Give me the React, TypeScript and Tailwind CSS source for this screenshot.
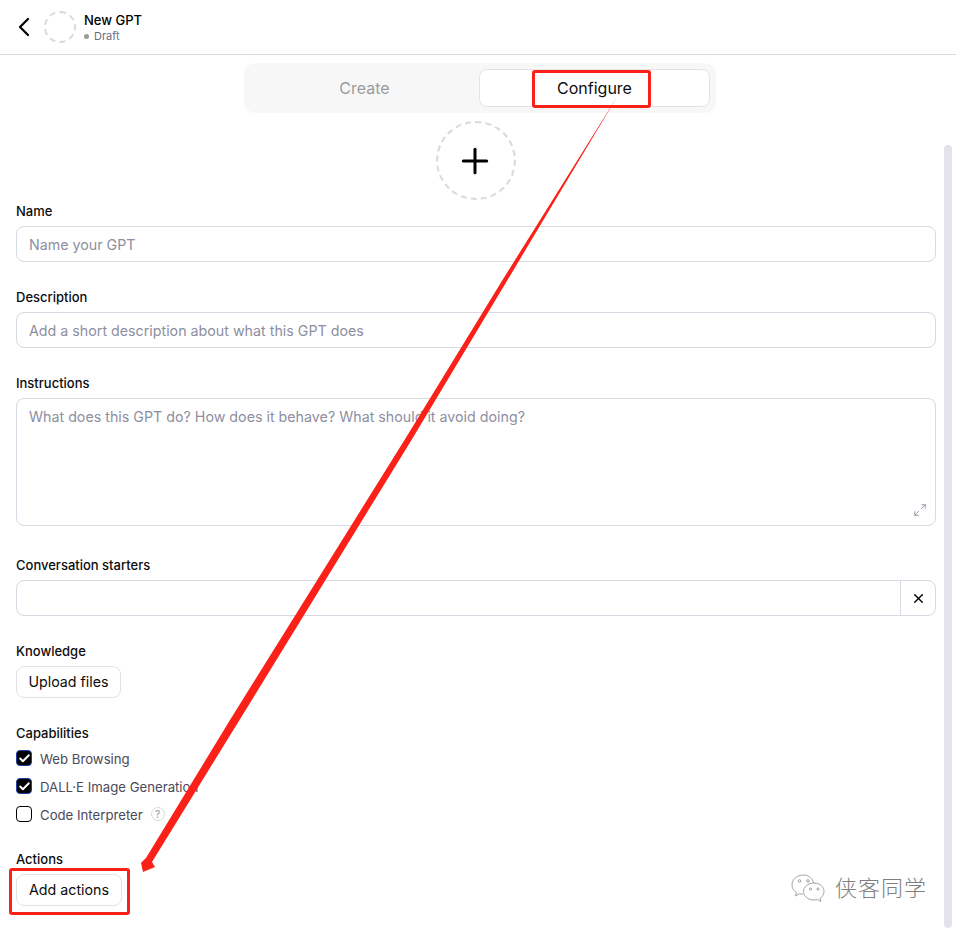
import React from 'react';
import { Check, ChevronLeft, Maximize2, Plus, X } from 'lucide-react';

const font = "font-['Inter','Noto_Sans_CJK_SC',sans-serif]";

const Label = ({ children }: { children: React.ReactNode }) => (
  <div className="h-5 text-[13px] leading-5 font-medium text-[#0d0d0d]">{children}</div>
);

const TextField = ({ placeholder }: { placeholder: string }) => (
  <div className="h-9 rounded-lg border border-[#d9d9e3] px-3 text-[14.25px] leading-9 text-[#8e8ea0]">{placeholder}</div>
);

const OutlineButton = ({ children, width }: { children: string; width: string }) => (
  <div className={`h-8 ${width} rounded-lg border border-[#e3e3e3] text-center text-[14.25px] leading-[30px] text-[#0d0d0d]`}>
    {children}
  </div>
);

const Capability = ({ label, checked }: { label: string; checked?: boolean }) => (
  <div className="flex h-5 items-center gap-2 text-[13.2px] text-[#4a4a5a]">
    {checked ? (
      <span className="flex size-4 items-center justify-center rounded-[4px] border border-[#1d3fa8] bg-black">
        <Check size={13} strokeWidth={3.5} className="text-white" />
      </span>
    ) : (
      <span className="size-4 rounded-[4px] border border-black bg-white" />
    )}
    <span className="mt-1 whitespace-nowrap">{label}</span>
  </div>
);

export default function App() {
  return (
    <div className={`${font} relative h-[930px] w-[956px] overflow-hidden bg-white`}>
      <header className="flex h-[55px] items-center border-b border-[#d9d9d9] pl-2">
        <ChevronLeft size={32} strokeWidth={1.7} className="text-black" />
        <div className="ml-1 size-8 rounded-full border-2 border-dashed border-[#d9d9d9]" />
        <div className="ml-2 pt-px">
          <div className="text-[13px] leading-[18px] font-medium text-black">New GPT</div>
          <div className="flex items-center gap-[5px] text-[11px] leading-[15px] text-[#6e6e80]">
            <span className="size-[5px] rounded-full bg-[#9a9a9a]" />
            Draft
          </div>
        </div>
      </header>

      <div className="ml-[244px] pt-2">
        <div className="flex h-[50px] w-[472px] rounded-xl bg-[#f7f7f7] p-1.5">
          <div className="flex-1 text-center text-base leading-[38px] text-[#9b9b9b]">Create</div>
          <div className="flex-1 rounded-lg border border-[#e3e3e3] bg-white text-center text-base leading-[36px] text-[#0d0d0d]">
            Configure
          </div>
        </div>
      </div>

      <div className="mt-2 flex w-[952px] justify-center">
        <div className="flex h-[79px] w-20 items-center justify-center rounded-full border-2 border-dashed border-[#d9d9d9]">
          <Plus size={40} strokeWidth={1.8} className="-translate-x-px text-black" />
        </div>
      </div>

      <form className="mt-px flex w-[952px] flex-col gap-[25px] px-4">
        <div className="flex flex-col gap-[5px]">
          <Label>Name</Label>
          <TextField placeholder="Name your GPT" />
        </div>
        <div className="flex flex-col gap-[5px]">
          <Label>Description</Label>
          <TextField placeholder="Add a short description about what this GPT does" />
        </div>
        <div className="mb-1 flex flex-col gap-[5px]">
          <Label>Instructions</Label>
          <div className="relative h-32 rounded-lg border border-[#d9d9e3] px-3 pt-2 text-[14.25px] leading-5 text-[#8e8ea0]">
            What does this GPT do? How does it behave? What should it avoid doing?
            <Maximize2 size={14} strokeWidth={1.5} className="absolute right-2 bottom-2 text-[#8e8ea0]" />
          </div>
        </div>
        <div className="flex flex-col gap-[5px]">
          <Label>Conversation starters</Label>
          <div className="flex h-9 justify-end rounded-lg border border-[#d9d9e3]">
            <div className="flex w-[35px] items-center justify-center border-l border-[#d9d9e3]">
              <X size={15} strokeWidth={2.3} className="text-black" />
            </div>
          </div>
        </div>
        <div className="flex flex-col gap-[5px]">
          <Label>Knowledge</Label>
          <OutlineButton width="w-[105px]">Upload files</OutlineButton>
        </div>
        <div className="flex flex-col gap-[5px]">
          <Label>Capabilities</Label>
          <div className="flex flex-col gap-2">
            <Capability label="Web Browsing" checked />
            <Capability label="DALL·E Image Generation" checked />
            <div className="flex items-center gap-2">
              <Capability label="Code Interpreter" />
              <span className="flex size-[14px] items-center justify-center rounded-full border-[1.5px] border-[#d9d9d9] text-[10px] font-medium text-[#a0a0a0]">
                ?
              </span>
            </div>
          </div>
        </div>
        <div className="flex flex-col gap-[5px]">
          <Label>Actions</Label>
          <OutlineButton width="w-[106px]">Add actions</OutlineButton>
        </div>
      </form>

      {/* scrollbar */}
      <div className="absolute top-[145px] right-1 h-[783px] w-2 rounded bg-[#e3e3ed]" />

      {/* annotation layer */}
      <div className="absolute top-[70px] left-[532px] h-[38px] w-[119px] rounded-[3px] border-[3px] border-[#fb2018]" />
      <div className="absolute top-[868px] left-[9px] h-[47px] w-[121px] rounded-[3px] border-[3px] border-[#fb2018]" />
      <svg className="absolute top-0 left-0" width="956" height="930" viewBox="0 0 956 930">
        <polygon
          points="617,97 507.500,280 411.500,440 239.500,720 152,862 155,867 143,872 141,862.700 146,858 230,720 404.500,440 502.500,280"
          fill="#fb2018"
        />
      </svg>

      {/* watermark */}
      <div className="absolute top-[872px] left-[790px] flex items-center gap-[9px]">
        <svg width="36" height="32" viewBox="0 0 36 32" fill="none" stroke="#9a9a9a" strokeWidth="0.9">
          <path d="M14 3C7 3 2 7 2 13c0 3.500 2 6 4.500 7.500L5.500 24l4-2.200c1 .3 2 .4 3.500.4" />
          <path d="M24 11.500C22.500 6.500 18.500 3 14 3" />
          <path d="M24 11c-6 0-10.500 4-10.500 8.500S18 28 24 28c1.200 0 2.300-.2 3.300-.5l3.700 2-1-3.300c2.500-1.600 4-4 4-6.700C34 15 30 11 24 11z" />
          <circle cx="9.500" cy="9" r="1.300" />
          <circle cx="18" cy="9" r="1.300" />
          <circle cx="20.500" cy="17" r="1.100" />
          <circle cx="28" cy="17" r="1.100" />
        </svg>
        <span className="text-[22px] leading-7 font-light tracking-[1px] text-[#808080] [text-shadow:1px_1px_0_#ffffff]">侠客同学</span>
      </div>
    </div>
  );
}
